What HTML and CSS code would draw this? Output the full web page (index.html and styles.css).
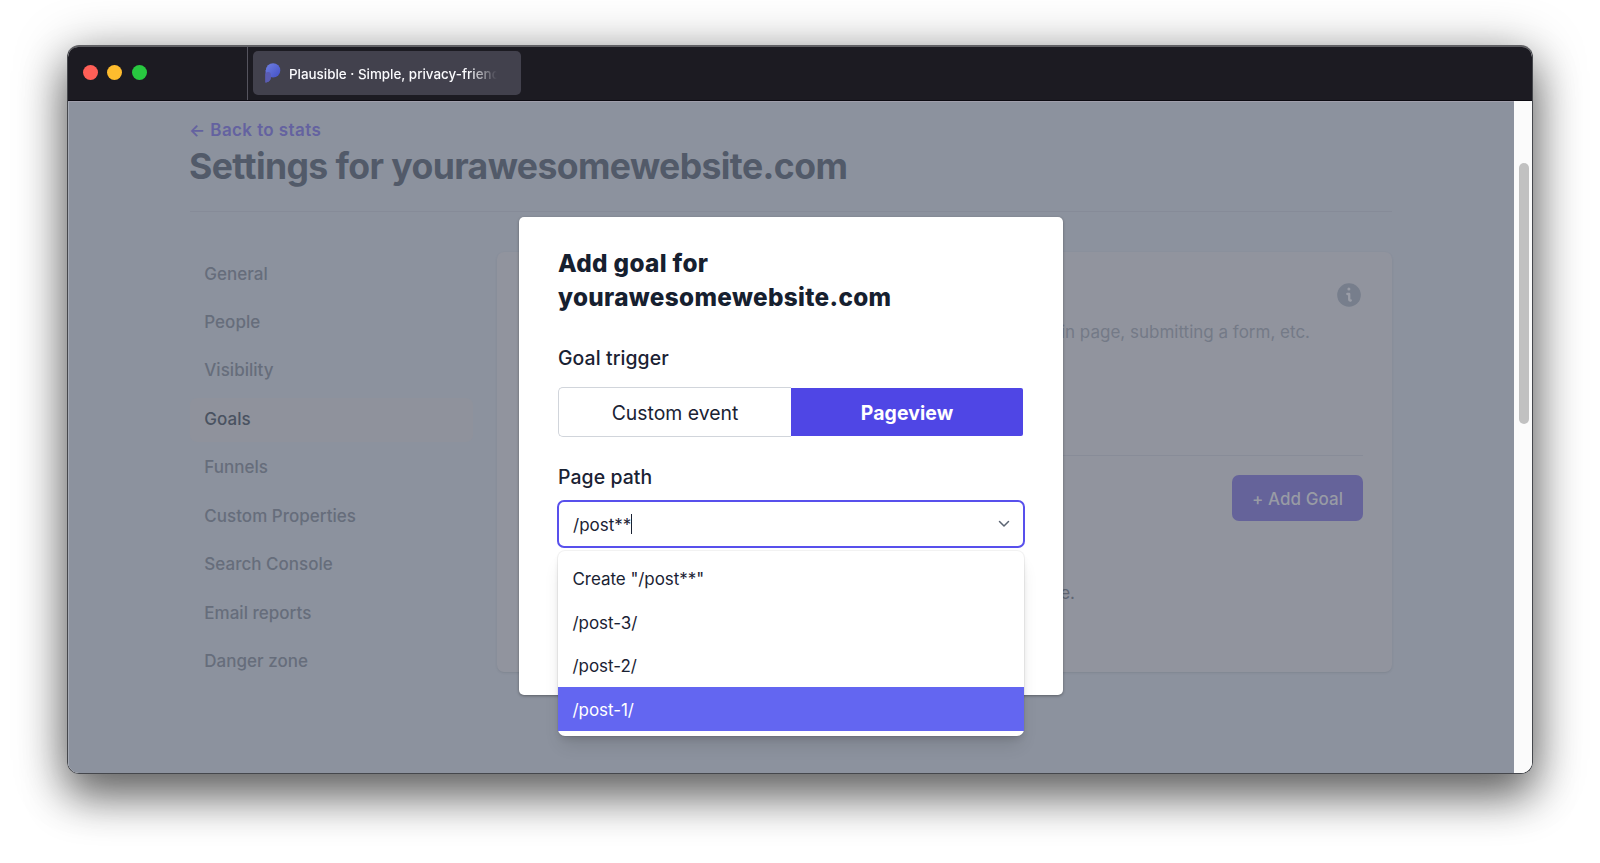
FILE: index.html
```
<!DOCTYPE html>
<html lang="en">
<head>
<meta charset="utf-8">
<title>Plausible · Simple, privacy-friendly</title>
<link rel="stylesheet" href="styles.css">
</head>
<body>
<div class="window">
  <header class="titlebar">
    <div class="lights"><i class="light red"></i><i class="light yellow"></i><i class="light green"></i></div>
    <div class="tab">
      <svg class="logo" width="16" height="20" viewBox="0 0 16 20">
        <defs><linearGradient id="lg" x1="0" y1="0" x2="1" y2="1"><stop offset="0" stop-color="#6f7fe0"/><stop offset="1" stop-color="#4350c6"/></linearGradient></defs>
        <path d="M.4 7h5.400v7.400c0 2.800-2.400 5-5.400 5z" fill="#5a5cb2"/>
        <circle cx="8.100" cy="7.400" r="7.200" fill="url(#lg)"/>
        <path d="M.4 11c.8-1.400 1.800-1.900 3-1.900 1.500 0 2.400.9 2.400 2.400v3C5.800 17.200 3.400 19.400.4 19.400z" fill="#5a5cb2"/>
      </svg>
      <span class="tab-title">Plausible · Simple, privacy-friend</span>
    </div>
  </header>
  <div class="viewport">
    <main class="page">
      <a class="back">← Back to stats</a>
      <h1 class="title">Settings for yourawesomewebsite.com</h1>
      <div class="columns">
        <nav class="nav">
          <a class="nav-item">General</a>
          <a class="nav-item">People</a>
          <a class="nav-item">Visibility</a>
          <a class="nav-item active">Goals</a>
          <a class="nav-item">Funnels</a>
          <a class="nav-item">Custom Properties</a>
          <a class="nav-item">Search Console</a>
          <a class="nav-item">Email reports</a>
          <a class="nav-item">Danger zone</a>
        </nav>
        <section class="card">
          <svg class="info" width="24" height="24" viewBox="0 0 24 24">
            <circle cx="12" cy="12" r="11.800" fill="#777e8c"/>
            <circle cx="11.900" cy="6.100" r="1.500" fill="#9a9da7"/>
            <path d="M10.300 11h1.900v5.600c0 .6.200.9.800.9h.8" fill="none" stroke="#9a9da7" stroke-width="2.300" stroke-linecap="round" stroke-linejoin="round"/>
          </svg>
          <p class="description">in page, submitting a form, etc.</p>
          <hr class="rule">
          <button class="add">+ Add Goal</button>
          <p class="empty">e.</p>
        </section>
      </div>
    </main>
    <div class="scrollbar"><div class="thumb"></div></div>
  </div>

  <div class="modal">
    <h2 class="modal-title">Add goal for<br>yourawesomewebsite.com</h2>
    <div class="label">Goal trigger</div>
    <div class="segments">
      <div class="segment">Custom event</div>
      <div class="segment selected">Pageview</div>
    </div>
    <div class="label">Page path</div>
    <div class="combo">
      <div class="input">
        <span class="value">/post**</span><i class="caret"></i>
        <svg class="chevron" width="12" height="8" viewBox="0 0 12 8"><path d="M1.500 1.500 6 6l4.500-4.500" fill="none" stroke="#5b6472" stroke-width="1.500" stroke-linecap="round" stroke-linejoin="round"/></svg>
      </div>
      <div class="dropdown">
        <div class="option">Create "/post**"</div>
        <div class="option">/post-3/</div>
        <div class="option">/post-2/</div>
        <div class="option highlighted">/post-1/</div>
      </div>
    </div>
  </div>
</div>
</body>
</html>
```
FILE: styles.css
```
* { box-sizing: border-box; }
body {
  margin: 0;
  height: 863px;
  padding: 45px 67px 0;
  overflow: hidden;
  background: #fff;
  font-family: Inter, "Liberation Sans", sans-serif;
  color: #1a2233;
}
h1, h2, p { margin: 0; }
.window {
  position: relative;
  width: 1466px;
  height: 729px;
  border: 1px solid #45474c;
  border-top: 2px solid #606064;
  border-radius: 12px;
  box-shadow: 0 24px 44px rgba(0, 0, 0, .48), 0 6px 52px rgba(0, 0, 0, .34);
}
.titlebar {
  display: flex;
  height: 54px;
  background: #1c1b22;
  border-bottom: 1px solid #0c0b12;
  border-radius: 10px 10px 0 0;
}
.lights {
  display: flex;
  gap: 9.300px;
  width: 180px;
  padding: 18px 0 0 15.200px;
  border-right: 1px solid #55545e;
}
.light { width: 15px; height: 15px; border-radius: 50%; }
.red { background: #ff5f57; }
.yellow { background: #febc2e; }
.green { background: #28c840; }
.tab {
  display: flex;
  align-items: center;
  width: 268px;
  height: 44px;
  margin: 4px 0 0 5px;
  padding-left: 12px;
  border-radius: 5px;
  background: #42414d;
}
.logo { flex: none; }
.tab-title {
  margin: 1px 0 0 8px;
  white-space: nowrap;
  font-size: 13.400px;
  font-weight: 500;
  color: #fbfbfe;
  -webkit-mask-image: linear-gradient(90deg, #000 180px, transparent 208px);
  mask-image: linear-gradient(90deg, #000 180px, transparent 208px);
}
.viewport {
  display: flex;
  height: 672px;
  overflow: hidden;
  border-radius: 0 0 11px 11px;
}
.page {
  display: flex;
  flex-direction: column;
  flex: 1;
  padding: 16px 122px 0 121px;
  background: #8c929e;
  border-top: 1px solid #a09fac;
  border-left: 1px solid #a5aab4;
}
.back {
  height: 24px;
  margin-left: -1px;
  line-height: 24px;
  font-size: 17px;
  font-weight: 600;
  letter-spacing: .4px;
  color: #6462a0;
}
.title {
  height: 70px;
  padding-top: 3px;
  line-height: 44px;
  border-bottom: 1px solid #868b98;
  font-size: 35.600px;
  font-weight: 700;
  letter-spacing: -.600px;
  text-indent: -1px;
  color: #525a69;
}
.columns { display: flex; gap: 24px; margin-top: 40px; }
.nav { display: flex; flex-direction: column; gap: 4.850px; width: 283px; padding-top: .5px; }
.nav-item {
  height: 43.650px;
  padding-left: 14.300px;
  border-radius: 7px;
  line-height: 43.650px;
  font-size: 17px;
  font-weight: 500;
  letter-spacing: .020px;
  color: #666d7b;
}
.nav-item.active { background: #8f929c; color: #4a5261; }
.card {
  display: flex;
  flex-direction: column;
  align-items: flex-end;
  flex: 1;
  height: 420px;
  padding: 31px 29px 0;
  border-radius: 7px;
  background: #91949e;
  box-shadow: 0 1px 2px rgba(70, 75, 90, .18);
}
.info { margin-right: 2px; }
.description {
  margin: 13px 53px 0 0;
  line-height: 24px;
  font-size: 17px;
  letter-spacing: 0;
  color: #747a87;
}
.rule { width: 100%; height: 1px; margin: 111px 0 0; border: 0; background: #888c98; }
.add {
  width: 131px;
  height: 46px;
  margin: 19px 0 0;
  padding: 2px 0 0;
  border: 0;
  border-radius: 7px;
  background: #65639a;
  font: 500 17px Inter, sans-serif;
  letter-spacing: .050px;
  color: #989ba5;
}
.empty {
  margin: 60px 288px 0 0;
  line-height: 24px;
  font-size: 17px;
  color: #5f6674;
}
.scrollbar { width: 18px; padding: 62px 4px 0 5px; background: #fbfbfb; }
.thumb { width: 10px; height: 261px; margin: 0 auto; border-radius: 5px; background: #c1c1c1; }
.modal {
  position: absolute;
  left: 451px;
  top: 170px;
  width: 544px;
  height: 478px;
  padding: 29px 40px 0 39px;
  border-radius: 5px;
  background: #fff;
  box-shadow: 0 1px 3px rgba(0, 0, 0, .35);
}
.modal-title {
  margin-bottom: 27px;
  line-height: 34px;
  font-size: 24.300px;
  font-weight: 800;
  letter-spacing: .340px;
  color: #16202f;
}
.label {
  line-height: 34px;
  font-size: 19.400px;
  font-weight: 500;
  letter-spacing: .100px;
}
.segments { display: flex; height: 50px; margin: 12px 0 23px; }
.segment {
  flex: 1;
  border: 1px solid #d1d5db;
  border-right: 0;
  border-radius: 5px 0 0 5px;
  text-align: center;
  line-height: 50px;
  font-size: 19.400px;
}
.segment.selected { margin: 1px 0; border: 0; border-radius: 0 2px 2px 0; background: #4f46e5; color: #fff; font-weight: 700; letter-spacing: .1px; }
.combo { position: relative; margin: 6px -2px 0 -1px; }
.input {
  display: flex;
  align-items: center;
  height: 48px;
  padding: 0 13px 0 14px;
  border: 2px solid #5850ec;
  border-radius: 7px;
  font-size: 17px;
}
.value { padding-top: 1px; }
.caret { width: 1px; height: 20px; background: #1a2233; }
.chevron { margin-left: auto; }
.dropdown {
  position: absolute;
  left: 1px;
  right: 1px;
  top: 51px;
  height: 185px;
  padding: 5px 0;
  border-radius: 7px;
  background: #fff;
  box-shadow: 0 0 0 1px rgba(0, 0, 0, .05), 0 12px 18px -4px rgba(0, 0, 0, .12), 0 4px 7px -2px rgba(0, 0, 0, .12);
}
.option { height: 43.700px; padding: 1px 0 0 14.500px; line-height: 44.700px; font-size: 17px; letter-spacing: -.050px; }
.highlighted { background: #6366f1; color: #fff; }
```
